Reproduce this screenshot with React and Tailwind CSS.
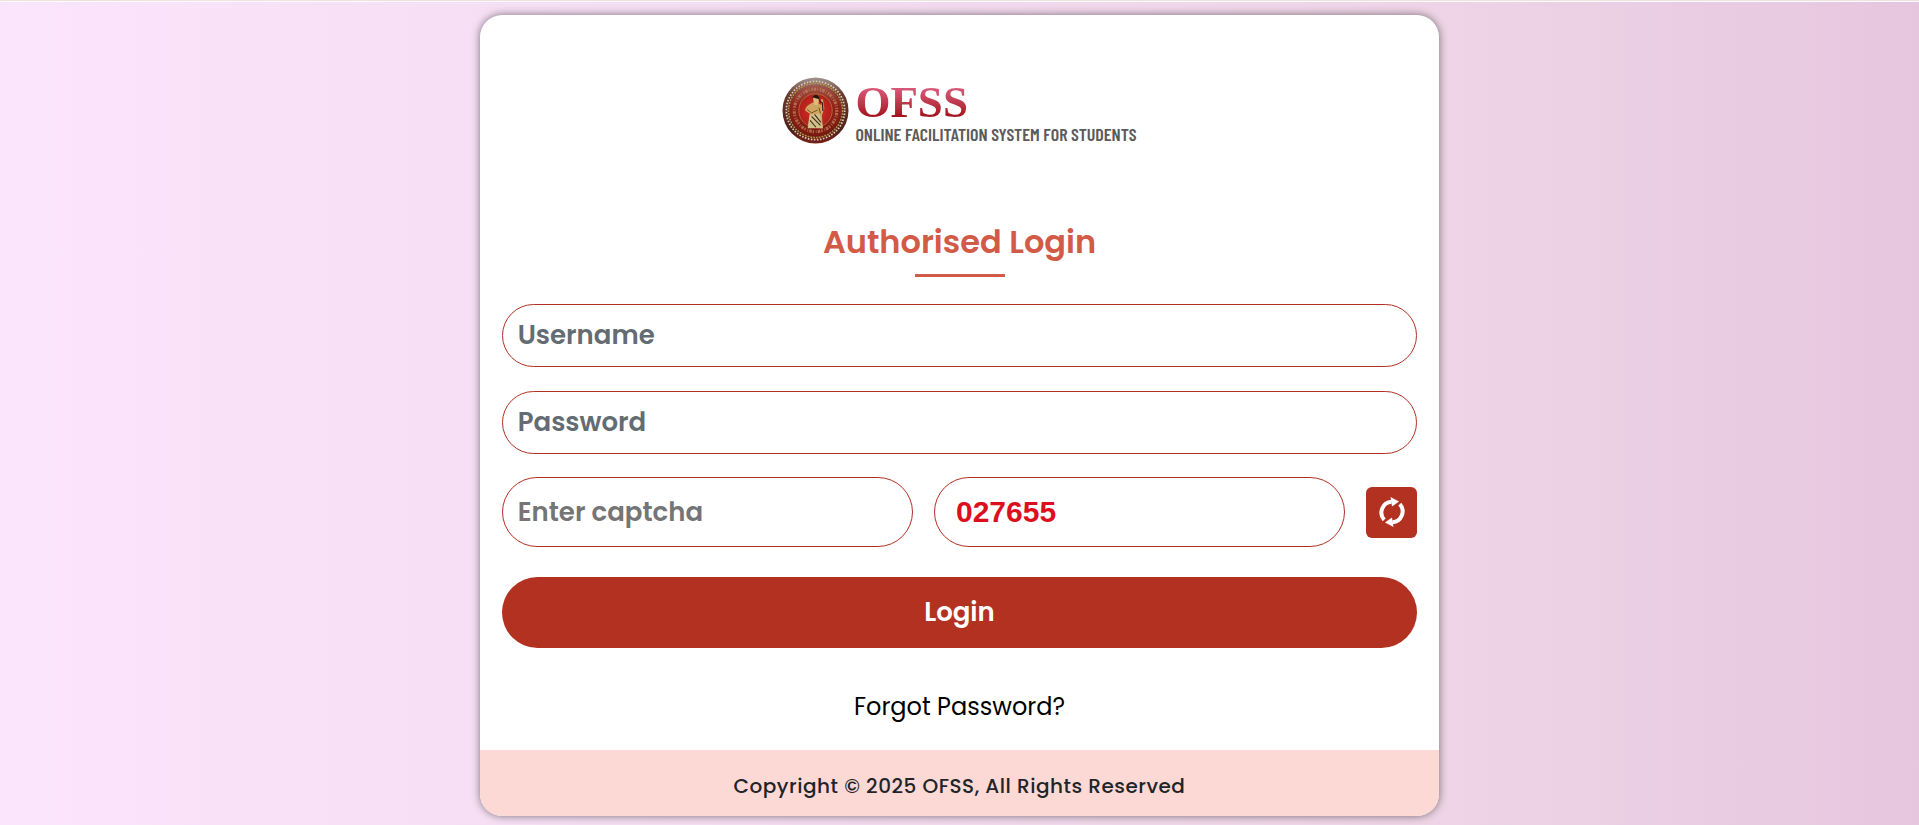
import React, { useState } from "react";

const fieldClass =
  "w-full rounded-full border border-[#b23121] bg-white px-[15px] text-[26px] font-semibold text-gray-700 outline-none";

function Emblem() {
  return (
    <svg viewBox="0 0 68 68" className="h-[67px] w-[67px] shrink-0" aria-hidden="true">
      <defs>
        <linearGradient id="rim" x1="0" y1="0" x2="0" y2="1">
          <stop offset="0" stopColor="#a09490" />
          <stop offset="0.25" stopColor="#6a3a30" />
          <stop offset="0.8" stopColor="#4f2018" />
          <stop offset="1" stopColor="#7a2018" />
        </linearGradient>
        <linearGradient id="band" x1="0" y1="0" x2="0" y2="1">
          <stop offset="0" stopColor="#a05a50" />
          <stop offset="0.4" stopColor="#8f2019" />
          <stop offset="1" stopColor="#7c1712" />
        </linearGradient>
        <radialGradient id="core">
          <stop offset="0" stopColor="#d8302a" />
          <stop offset="1" stopColor="#b01f1a" />
        </radialGradient>
      </defs>
      <circle cx="34" cy="34" r="33.5" fill="url(#rim)" />
      <circle cx="34" cy="34" r="29.6" fill="none" stroke="#d8ccb4" strokeWidth="1.8" strokeDasharray="1.6 1.5" />
      <circle cx="34" cy="34" r="27.4" fill="none" stroke="#c0903f" strokeWidth="1.6" strokeDasharray="1.8 1.1" />
      <circle cx="34" cy="34" r="26" fill="url(#band)" />
      <circle cx="34" cy="34" r="21.6" fill="none" stroke="#c08a5a" strokeWidth="3.2" strokeDasharray="1.4 1 2.6 1.2 0.8 1.8" opacity="0.7" />
      <circle cx="34" cy="34" r="17" fill="url(#core)" stroke="#b5713a" strokeWidth="0.9" />
      {/* figure */}
      <path d="M31.5 26c-3 1.500-8 4-8 8l5 3.500-2 14 15 .5-1-13 2.500-7-1.500-9.500-2 .2.500 5.500z" fill="#d0a561" />
      <path d="M28 38l10-1 3.500 15H26z" fill="#d3c08a" />
      <path d="M30 40l9 9M28.500 44l6 7M33 38l6.500 8" stroke="#3a2c1e" strokeWidth="1.100" />
      <path d="M25.500 33l4.500 3.500 6-3M37.500 31l1.500 6" fill="none" stroke="#5a3a1c" strokeWidth="0.8" />
      <path d="M31.500 20.500c0-3 5.500-3.500 6 0l-.3 6.500c-.5 2-4.500 2-5 0z" fill="#dfba78" />
      <path d="M31 22c-.5-5 6.500-5.500 7-.5l.4 4.500-1.400-4c-2 .2-4-.8-4.800-1.200z" fill="#1f1512" />
      <path d="M38.500 24.500l2.500 2 .6 8" fill="none" stroke="#2b1a12" strokeWidth="1.200" />
    </svg>
  );
}

function Logo() {
  return (
    <div className="flex items-center justify-center gap-1.5">
      <Emblem />
      <div className="flex flex-col">
        <span className="bg-linear-to-b from-[#d9587a] from-20% to-[#a3141f] to-80% bg-clip-text font-['Liberation_Serif',serif] text-[45px] leading-[46px] font-bold text-transparent">
          OFSS
        </span>
        <span className="font-['Barlow_Condensed','Roboto_Condensed','Liberation_Sans',sans-serif] text-[18px] leading-[18px] font-semibold whitespace-nowrap text-[#5b5b5b]">
          ONLINE FACILITATION SYSTEM FOR STUDENTS
        </span>
      </div>
    </div>
  );
}

function RefreshIcon() {
  return (
    <svg viewBox="0 0 30 30" className="h-[30px] w-[30px]" aria-hidden="true">
      <path d="M7.200 22.800A10.800 10.800 0 0 1 14.500 4.800" fill="none" stroke="#fff" strokeWidth="4" />
      <path d="M13.500 0l8.500 4.500-7 5z" fill="#fff" />
      <path d="M22.800 7.200A10.800 10.800 0 0 1 15.500 25.200" fill="none" stroke="#fff" strokeWidth="4" />
      <path d="M16.500 30l-8.500-4.500 7-5z" fill="#fff" />
    </svg>
  );
}

export default function App() {
  const [form, setForm] = useState({ username: "", password: "", captcha: "" });

  const handleChange = (e) => {
    setForm({ ...form, [e.target.name]: e.target.value });
  };

  return (
    <div className="min-h-screen border-t border-[#f5dfdf] bg-white pt-px font-['Poppins','Inter',sans-serif]">
      <div className="flex min-h-[calc(100vh-2px)] items-start justify-center bg-linear-to-r from-[#fbe5fc] via-[#eed4e6] via-75% to-[#e6c6df] pt-[13px] pb-[9px]">
        <main className="w-1/2 overflow-hidden rounded-[22px] bg-white shadow-[0_0_8px_rgba(0,0,0,0.5)]">
          <div className="px-[22px] pt-[62px]">
            <Logo />

            <div className="mt-[78px] flex flex-col items-center">
              <h1 className="text-[32px] leading-10 font-semibold text-[#d15b47]">Authorised Login</h1>
              <div className="mt-3 h-[3px] w-[90px] bg-[#d15b47]" />
            </div>

            <form className="mt-[27px]" onSubmit={(e) => e.preventDefault()}>
              <input
                type="text"
                name="username"
                aria-label="Username"
                placeholder="Username"
                value={form.username}
                onChange={handleChange}
                className={`${fieldClass} h-[63px] placeholder:text-[#636c72]`}
              />
              <input
                type="password"
                name="password"
                aria-label="Password"
                placeholder="Password"
                value={form.password}
                onChange={handleChange}
                className={`${fieldClass} mt-6 h-[63px] placeholder:text-[#636c72]`}
              />

              <div className="mt-[23px] grid grid-cols-[1fr_1fr_auto] items-center gap-[21px]">
                <input
                  type="text"
                  name="captcha"
                  aria-label="Enter captcha"
                  placeholder="Enter captcha"
                  value={form.captcha}
                  onChange={handleChange}
                  className={`${fieldClass} h-[70px] min-w-0 placeholder:text-[#757575]`}
                />
                <div className="flex h-[70px] items-center rounded-full border border-[#b23121] px-[21px]">
                  <span className="font-['Liberation_Sans',sans-serif] text-[30px] leading-9 font-bold text-[#dc0f1e]">
                    027655
                  </span>
                </div>
                <button
                  type="button"
                  aria-label="Refresh captcha"
                  className="flex h-[51px] w-[51px] items-center justify-center rounded-md bg-[#b23121]"
                >
                  <RefreshIcon />
                </button>
              </div>

              <button
                type="submit"
                className="mt-[30px] h-[71px] w-full rounded-full bg-[#b23121] text-[26px] font-semibold text-white"
              >
                Login
              </button>
            </form>

            <div className="mt-10 pb-6 text-center">
              <a href="#" className="text-[24px] leading-[38px] text-black">
                Forgot Password?
              </a>
            </div>
          </div>

          <footer className="flex h-[66px] items-center justify-center bg-[#fcd9d4] pt-1.5">
            <p className="text-[20px] leading-7 font-medium tracking-wide text-[#212529]">
              Copyright © 2025 OFSS, All Rights Reserved
            </p>
          </footer>
        </main>
      </div>
    </div>
  );
}
